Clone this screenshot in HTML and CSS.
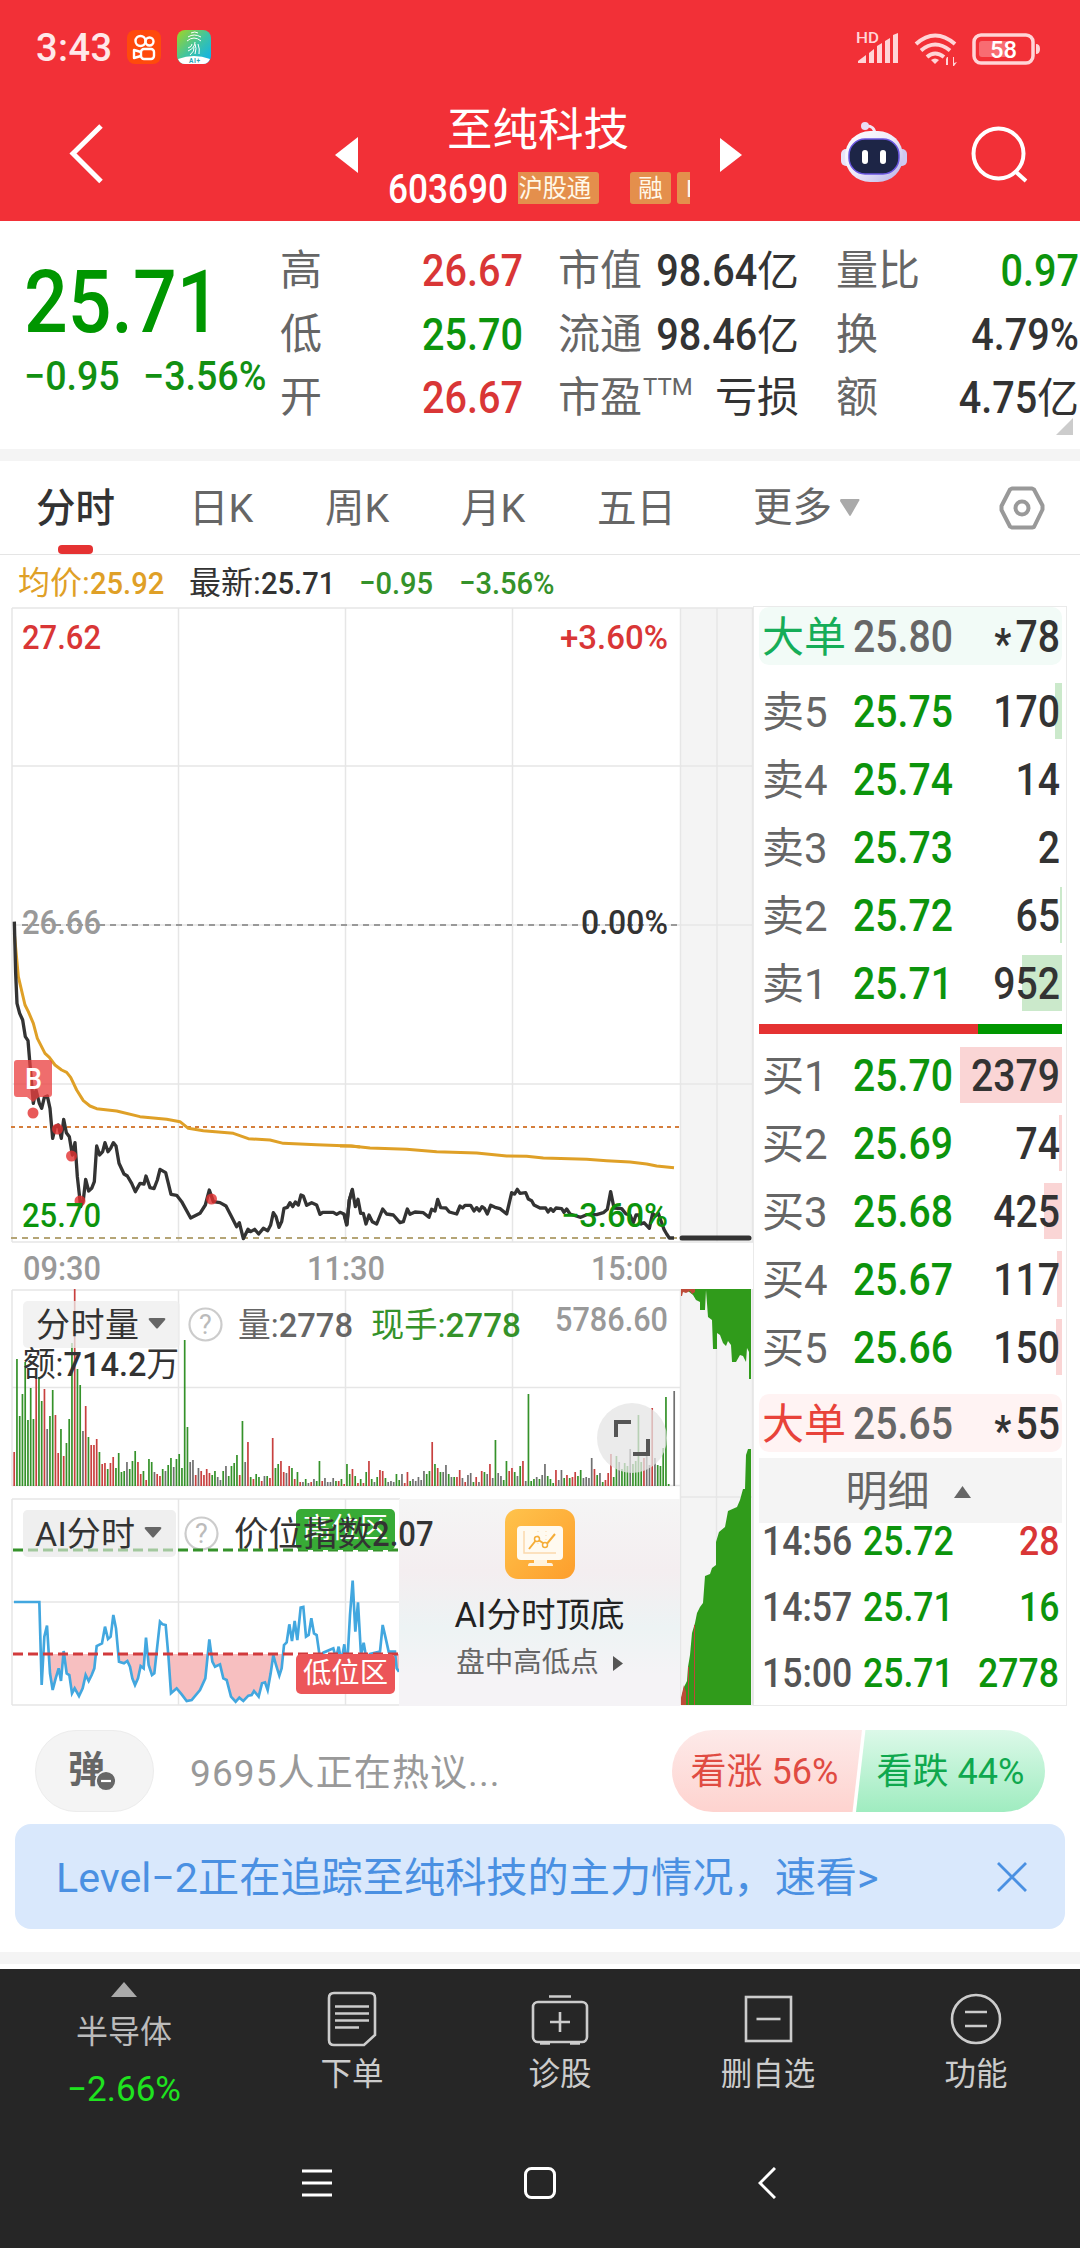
FILE: index.html
```html
<!DOCTYPE html>
<html lang="zh-CN">
<head>
<meta charset="utf-8">
<title>至纯科技 603690</title>
<link rel="stylesheet" href="styles.css">
</head>
<body>
<header class="top">
  <div class="status">
    <span class="clock">3:43</span>
    <svg class="app" width="34" height="34" viewBox="0 0 34 34"><rect width="34" height="34" rx="8" fill="#ff4a0c"/><g fill="none" stroke="#fff" stroke-width="2.400"><circle cx="13.500" cy="11" r="5"/><circle cx="22.500" cy="11.500" r="4"/><rect x="14" y="19" width="13" height="10" rx="3"/><path d="M14 22l-7-2v8l7-2" stroke-linejoin="round"/></g></svg>
    <svg class="app2" width="34" height="34" viewBox="0 0 34 34"><defs><linearGradient id="ga" x1="0" y1="0" x2="1" y2="1"><stop offset="0" stop-color="#a2d522"/><stop offset=".5" stop-color="#40c4a0"/><stop offset="1" stop-color="#08aef5"/></linearGradient></defs><rect width="34" height="34" rx="8" fill="url(#ga)"/><path d="M1 29Q17 23 33 29Q31 34 26 34H8Q3 34 1 29" fill="#fff"/><g fill="none" stroke="#fff" stroke-width="1"><path d="M14 3q4-2 7 0M11 7q6-4 13 0M10 11q7-6 14 0M18 12q0 6-7 9M15 14q0 3-4 4M17 17q1 4-4 8M18 14q2 4 0 10M21 14q2 5 1 10"/></g><text x="12" y="33" font-size="6.500" font-weight="700" fill="#29a7b8" textLength="11">AI+</text></svg>
    <span class="grow"></span>
    <svg width="186" height="40" viewBox="856 26 186 40" fill="#ffd5d7">
      <text x="857" y="42" font-size="15" font-weight="500" textLength="23" lengthAdjust="spacingAndGlyphs">HD</text>
      <path d="M859 62v-2l8-6v8zM870 62v-10l5-4v14zM878 62v-17l5-3v20zM886 62v-22l5-3v25zM894 62v-28l5-2v30z"/>
      <g fill="none" stroke="#ffd5d7" stroke-width="4"><path d="M917 43q19-17 39 0M922 49.500q14-12 29 0M928 56q8-7 17 0"/></g>
      <path d="M932 59q4-3 8 0l-4 4zM947 64v-6l1-2h1v8zM954 65v-9h1v6l3-1-3 4z"/>
      <rect x="975" y="34" width="59" height="28" rx="7" fill="none" stroke="#ffd5d7" stroke-width="3.500"/><rect x="980" y="40" width="29" height="16" rx="3" fill="#f86c72"/><path d="M1037 43q4 0 4 5t-4 5z"/>
      <text x="991" y="57" font-size="24" font-weight="500" fill="#fff" textLength="27" lengthAdjust="spacingAndGlyphs">58</text>
    </svg>
  </div>
  <div class="titlebar">
    <svg class="back" width="40" height="64" viewBox="68 121 40 64"><path d="M101 126L73 153.500l28 28" fill="none" stroke="#fff" stroke-width="5"/></svg>
    <svg class="prev" width="23" height="36"><path d="M0 18L23 0V36z" fill="#fff"/></svg>
    <div class="name">
      <h1>至纯科技</h1>
      <div class="code"><span class="num">603690</span><span class="tags"><i class="tag first">沪股通</i><i class="tag fin">融</i><i class="tag cut">L</i></span></div>
    </div>
    <svg class="next" width="22" height="34"><path d="M0 0L22 17L0 34z" fill="#fff"/></svg>
    <svg class="robot" width="68" height="64" viewBox="841 121 68 64"><defs><linearGradient id="rb" x1="0" y1="0" x2="1" y2="1"><stop offset="0" stop-color="#fff"/><stop offset=".5" stop-color="#eeeaf9"/><stop offset="1" stop-color="#b5afe8"/></linearGradient></defs><path d="M866 126q10-1 10 9" fill="none" stroke="#f4e5f4" stroke-width="3"/><circle cx="866" cy="126" r="4" fill="#eadcf4"/><rect x="842" y="149" width="12" height="17" rx="5" fill="#e7e3f8"/><rect x="896" y="149" width="12" height="17" rx="5" fill="#cfc9f2"/><rect x="846" y="131" width="58" height="51" rx="25" fill="url(#rb)"/><rect x="850" y="139" width="50" height="35" rx="16" fill="#1d2546" stroke="#6a56e0" stroke-width="1.500"/><rect x="863" y="150" width="6" height="14" rx="3" fill="#fff"/><rect x="881" y="150" width="6" height="14" rx="3" fill="#fff"/></svg>
    <svg class="search" width="58" height="60" viewBox="972 126 58 60" fill="none" stroke="#fff" stroke-width="4"><circle cx="999.500" cy="153.500" r="25"/><path d="M1017 172l10 9"/></svg>
  </div>
</header>

<section class="quote">
  <div class="last">
    <div class="big num">25.71</div>
    <div class="chg"><span class="num">−0.95</span><span class="num">−3.56%</span></div>
  </div>
  <dl class="c1"><dt>高</dt><dd class="red num">26.67</dd><dt>低</dt><dd class="green num">25.70</dd><dt>开</dt><dd class="red num">26.67</dd></dl>
  <dl class="c2"><dt>市值</dt><dd><b class="num">98.64</b>亿</dd><dt>流通</dt><dd><b class="num">98.46</b>亿</dd><dt>市盈<sup>TTM</sup></dt><dd>亏损</dd></dl>
  <dl class="c3"><dt>量比</dt><dd class="green num">0.97</dd><dt>换</dt><dd class="num">4.79%</dd><dt>额</dt><dd><b class="num">4.75</b>亿</dd></dl>
  <svg class="corner" width="17" height="17"><path d="M17 0V17H0z" fill="#ccc"/></svg>
</section>

<nav class="tabs">
  <a class="on">分时</a><a>日K</a><a>周K</a><a>月K</a><a>五日</a>
  <a class="more">更多<svg width="20" height="17"><path d="M1 0h18q1 1 0 2L11 16q-1 2-2 0L0 2Q0 0 1 0" fill="#aaa"/></svg></a>
  <svg class="gear" width="46" height="46" viewBox="0 0 46 46" fill="none" stroke="#999" stroke-width="4"><path d="M13 3.500h20l2 1 8.500 16v4L35 42l-2 .500H13l-2-1L2.500 25v-4L11 4.500z" stroke-linejoin="round"/><circle cx="23" cy="23" r="6.500"/></svg>
</nav>
<div class="info"><span class="avg">均价:<b class="num">25.92</b></span><span class="new">最新:<b class="num">25.71</b></span><span class="num d1">−0.95</span><span class="num d2">−3.56%</span></div>

<main class="board">
  <div class="charts">
    <svg width="753" height="1106" viewBox="0 604 753 1106">
      <defs><clipPath id="low"><rect x="0" y="1107" width="1197" height="160"/></clipPath>
      <linearGradient id="ob" x1="0" y1="0" x2="1" y2="1"><stop offset="0" stop-color="#ffc34c"/><stop offset="1" stop-color="#fd9e2c"/></linearGradient></defs>
      <rect x="681" y="608" width="72" height="635" fill="#f4f4f4"/>
      <rect x="681" y="1289" width="72" height="417" fill="#f4f4f4"/>
      <g stroke="#e6e6e6" stroke-width="1.500" fill="none">
        <path d="M12 608H753M12 766H680M12 1084H753M12 925H753M680 766H753M12 1242H753M12 608V1242M178.500 608V1242M345.500 608V1242M512.500 608V1242M680.500 608V1242M717 608V1242M752.500 608V1242"/>
        <path d="M12 1290H680M12 1387.500H680M12 1485.500H680M12 1290V1486M178.500 1290V1486M345.500 1290V1486M512.500 1290V1486"/>
        <path d="M12 1499H400M12 1602H400M12 1705H400M12 1499V1705M178.500 1499V1705M345.500 1499V1705M680.500 1289V1705M716.500 1289V1705M681 1497H753M752.500 1289V1705"/>
      </g>
      <path d="M22 925H680" stroke="#999" stroke-width="2" stroke-dasharray="6 5"/>
      <path d="M11 1127H680" stroke="#d57e3c" stroke-width="2" stroke-dasharray="4 4"/>
      <path d="M11 1238H680" stroke="#b5a576" stroke-width="2" stroke-dasharray="6 5"/>
      <g fill="none" stroke="#dfa027" stroke-width="9" stroke-linejoin="round">
        <path transform="translate(0 890) scale(.33333)" d="M43 130L55 260 75 345 85 365 100 400 112 445 135 490 148 502 165 525 185 540 200 547 212 562 230 600 250 632 270 648 290 656 350 663 420 680 500 688 540 695 565 715 610 722 700 730 745 746 810 750 850 760 950 764 1050 768 1080 771"/>
        <path transform="translate(340 1080) scale(.33333)" d="M0 198L35 198 90 204 200 208 290 215 410 219 500 228 560 229 610 234 740 238 800 242 870 246 920 252 950 258 1002 263"/>
      </g>
      <g fill="none" stroke="#333" stroke-width="10" stroke-linejoin="round">
        <path transform="translate(0 890) scale(.33333)" d="M43 95L47 250 51 340 59 370 68 390 76 440 84 452 93 560 100 640 108 600 118 640 125 655 133 622 142 618 150 655 158 745 166 710 175 705 184 745 191 688 199 728 208 740 217 795 225 758 232 860 242 950 250 930 257 868 266 903 275 895 283 875 290 768 299 795 308 785 315 758 324 785 332 775 340 758 348 768 357 820 372 852 382 858 395 880 406 905 420 880 432 882 438 858 450 893 462 896 472 870 480 838 497 848 505 880 513 913 530 916 545 935 572 984 600 970 616 945 628 900 640 935 660 938 678 948 692 975 710 1010 718 998 730 1046 744 1018 752 1025 764 1018 776 1032 790 1015 803 1022 812 1005 820 968 828 980 837 1012 845 995 852 955 862 952 870 938 878 950 886 936 895 945 903 915 910 918 920 946 935 938 950 945 960 973 968 967 1000 967 1010 973 1020 967 1032 972 1041 1003 1048 930 1057 900"/>
        <path transform="translate(340 1080) scale(.33333)" d="M12 402L20 435 28 360 37 328 46 380 54 358 62 400 70 400 78 432 87 405 97 425 110 432 128 387 140 402 160 405 180 428 190 425 202 387 210 403 225 396 250 398 267 412 275 388 285 393 293 358 302 383 318 384 328 396 350 402 360 378 368 384 375 376 392 376 402 393 410 383 418 393 426 380 434 386 442 402 452 376 465 382 480 386 500 402 515 338 524 342 532 328 540 340 557 338 565 357 575 362 582 375 600 384 617 384 624 396 632 386 640 394 648 384 665 386 672 397 680 387 690 402 722 412 740 404 770 404 790 398 802 388 812 335 822 384 845 386 858 402 870 405 880 428 888 405 897 405 903 432 912 428 928 445 938 400 946 408 955 400 962 420 972 448 980 462 988 474 1002 474"/>
      </g>
      <path d="M682 1238H749" stroke="#333" stroke-width="5" stroke-linecap="round"/>
      <g fill="#e22f2f" fill-opacity=".8"><circle cx="33" cy="1113" r="5.500"/><circle cx="57.500" cy="1129" r="5.500"/><circle cx="71.500" cy="1156" r="5.500"/><circle cx="80" cy="1201" r="5.500"/><circle cx="211.500" cy="1199" r="5.500"/>
      <path d="M17 1060h32q3 0 3 3v31q0 3-3 3H39l-6 5-6-5H17q-3 0-3-3v-31q0-3 3-3" fill="#ea3f3f" fill-opacity=".76"/></g>
      <g font-weight="500" font-size="34">
        <text x="25" y="1089" font-size="29" fill="#fff" textLength="17" lengthAdjust="spacingAndGlyphs">B</text>
        <text x="22" y="649" fill="#d93636" textLength="79" lengthAdjust="spacingAndGlyphs">27.62</text>
        <text x="560" y="649" fill="#d93636" textLength="108" lengthAdjust="spacingAndGlyphs">+3.60%</text>
        <text x="22" y="934" fill="#999" textLength="79" lengthAdjust="spacingAndGlyphs">26.66</text>
        <text x="581" y="934" fill="#333" textLength="87" lengthAdjust="spacingAndGlyphs">0.00%</text>
        <text x="22" y="1227" fill="#0c940c" textLength="79" lengthAdjust="spacingAndGlyphs">25.70</text>
        <text x="561" y="1227" fill="#0c940c" textLength="107" lengthAdjust="spacingAndGlyphs">−3.60%</text>
        <g fill="#999"><text x="23" y="1280" textLength="78" lengthAdjust="spacingAndGlyphs">09:30</text><text x="307" y="1280" textLength="78" lengthAdjust="spacingAndGlyphs">11:30</text><text x="591" y="1280" textLength="77" lengthAdjust="spacingAndGlyphs">15:00</text></g>
      </g>

      <g id="volume" stroke-width="1.700"></g>
      <path fill="#309b1b" d="M681 1289H751V1379H749V1352L747 1348 746 1362 743 1356 740 1355 736 1362H732L731 1345 728 1341 726 1346 723 1343 720 1335 717 1333V1349H713L712 1320 708 1317 706 1290 705 1310H700V1302L696 1300 693 1295 688 1291z"/>
      <path fill="#bd4a38" d="M681 1289h14v3l-3 2-2-3-4 2-3-1-1 4h-1z"/>
      <path fill="#309b1b" d="M681 1705V1700L684 1687 687 1681 688 1667 690 1655 692 1633 695 1623 697 1613 700 1607 703 1603 705 1576 710 1574 712 1568 716 1565V1542L719 1532 725 1527 728 1511 737 1507 740 1500 743 1489H745L746 1455 748 1449H751V1705z"/>
      <path fill="#bd4a38" d="M681 1705V1698L684 1685 686 1692V1705zM688 1667h1v38h-1zM694 1625h1v80h-1z"/>

      <rect x="23" y="1301" width="157" height="47" rx="5" fill="#ededed" fill-opacity=".75"/>
      <rect x="23" y="1510" width="153" height="47" rx="5" fill="#ededed" fill-opacity=".75"/>
      <path d="M150 1318h14q2 0 1 2l-7 8q-1 1-2 0l-7-8q-1-2 1-2" fill="#666"/>
      <g fill="none" stroke="#ccc" stroke-width="2.200"><circle cx="205.500" cy="1324.500" r="16"/><circle cx="201.500" cy="1533.500" r="16"/></g>
      <g font-size="27" fill="#bbb" text-anchor="middle"><text x="205.500" y="1334">?</text><text x="201.500" y="1543">?</text></g>
      <g font-size="34" fill="#333">
        <text x="36" y="1337" textLength="103">分时量</text>
        <text x="238" y="1337" fill="#666" textLength="115" lengthAdjust="spacingAndGlyphs">量:<tspan font-weight="500">2778</tspan></text>
        <text x="371" y="1337" fill="#35922a" textLength="150" lengthAdjust="spacingAndGlyphs">现手:<tspan font-weight="500">2778</tspan></text>
        <text x="555" y="1331" fill="#999" font-weight="500" textLength="113" lengthAdjust="spacingAndGlyphs">5786.60</text>
        <text x="23" y="1376" textLength="156" lengthAdjust="spacingAndGlyphs">额:<tspan font-weight="500">714.2</tspan>万</text>
      </g>
      <circle cx="632" cy="1438" r="35" fill="#e4e4e4" fill-opacity=".75"/>
      <path d="M631 1422H616V1437M633 1454H648V1439" fill="none" stroke="#555" stroke-width="4"/>

      <path d="M13 1550H399" stroke="#35922a" stroke-width="3" stroke-dasharray="10 5"/>
      <g transform="translate(0 1285) scale(.33333)">
        <path fill="#f7bfc0" clip-path="url(#low)" d="M42 951L118 951 125 1200 133 1055 141 1022 150 1165 158 1215 167 1180 176 1150 183 1188 191 1098 200 1165 208 1170 216 1225 224 1210 237 1233 248 1210 257 1170 266 1188 275 1170 283 1150 290 1083 348 1030 357 1130 372 1135 382 1128 390 1145 397 1180 405 1200 414 1180 422 1143 431 1150 438 1058 446 1140 456 1170 463 1165 470 1100 505 1110 513 1225 530 1210 545 1228 560 1248 575 1245 600 1215 616 1180 628 1063 637 1130 645 1145 660 1138 670 1180 680 1185 693 1235 707 1250 718 1238 730 1248 745 1232 755 1230 762 1218 776 1235 786 1195 795 1192 803 1215 812 1165 820 1110 828 1140 838 1172 845 1150 852 1080 1185 1100 1190 1150 1197 1160V1080H42z"/>
        <path fill="none" stroke="#42a7df" stroke-width="8" d="M42 951L118 951 125 1200 133 1055 141 1022 150 1165 158 1215 167 1180 176 1150 183 1188 191 1098 200 1165 208 1170 216 1225 224 1210 237 1233 248 1210 257 1170 266 1188 275 1170 283 1150 290 1083 306 1075 315 1025 324 1062 332 1055 340 990 348 1030 357 1130 372 1135 382 1128 390 1145 397 1180 405 1200 414 1180 422 1143 431 1150 438 1058 446 1140 456 1170 463 1165 470 1100 480 1010 488 1018 497 1020 505 1110 513 1225 530 1210 545 1228 560 1248 575 1245 600 1215 616 1180 628 1063 637 1130 645 1145 660 1138 670 1180 680 1185 693 1235 707 1250 718 1238 730 1248 745 1232 755 1230 762 1218 776 1235 786 1195 795 1192 803 1215 812 1165 820 1110 828 1140 838 1172 845 1150 852 1080 860 1072 868 1018 876 1068 884 1008 892 1065 902 968 910 966 918 1055 926 1050 934 1000 942 1045 950 1050 960 1120 970 1103 1000 1090 1008 1120 1016 1085 1024 1130 1033 1078 1041 1150 1050 990 1058 887 1066 1040 1074 952 1083 1110 1091 1073 1099 1120 1110 1107 1140 1100 1148 1020 1156 1055 1166 1100 1185 1100 1190 1150 1197 1160"/>
      </g>
      <path d="M13 1654H399" stroke="#d13a3c" stroke-width="3" stroke-dasharray="10 5"/>
      <rect x="296" y="1509" width="99" height="41" rx="5" fill="#38ab36"/><rect x="296" y="1654" width="99" height="40" rx="5" fill="#ec5659"/>
      <rect x="23" y="1510" width="153" height="47" rx="5" fill="#ededed" fill-opacity=".6"/>
      <path d="M146 1527h14q2 0 1 2l-7 8q-1 1-2 0l-7-8q-1-2 1-2" fill="#666"/>
      <g font-size="28" fill="#fff"><text x="303" y="1538" textLength="85" lengthAdjust="spacingAndGlyphs">高位区</text><text x="303" y="1683" textLength="85" lengthAdjust="spacingAndGlyphs">低位区</text></g>
      <text x="35" y="1546" font-size="34" fill="#333" textLength="100">AI分时</text>
    </svg>
    <div class="aicard">
      <svg width="70" height="70" viewBox="0 0 70 70"><rect width="70" height="70" rx="13" fill="url(#ob)"/><rect x="12" y="17" width="46" height="34" rx="4" fill="#fffaf0"/><path d="M29 51h13v3h4q2 0 2 3h-25q0-3 2-3h4z" fill="#fff3dd"/><path d="M19 22v22h32" fill="none" stroke="#fbd9ac" stroke-width="1.500"/><path d="M33 22v16M41 22v16" stroke="#fbd9ac" stroke-dasharray="1 3"/><path d="M24 40l8-10 9 6 9-11" fill="none" stroke="#f5ad38" stroke-width="2"/><circle cx="32" cy="30" r="2.500" fill="#fff" stroke="#f5ad38" stroke-width="1.500"/><circle cx="40" cy="36" r="2.500" fill="#fff" stroke="#f5ad38" stroke-width="1.500"/></svg>
      <strong>AI分时顶底</strong>
      <span>盘中高低点<svg width="10" height="17"><path d="M0 1L10 8.500 0 16z" fill="#555"/></svg></span>
    </div>
    <div class="aiindex">价位指数<b class="num">2.07</b></div>
  </div>

  <aside class="book">
    <div class="row vip sell"><span>大单</span><b class="num">25.80</b><em class="num"><i class="star">*</i>78</em></div>
    <div class="group">
      <div class="row"><span>卖5</span><b class="num">25.75</b><em class="num">170</em><i class="depth" style="width:7px"></i></div>
      <div class="row"><span>卖4</span><b class="num">25.74</b><em class="num">14</em></div>
      <div class="row"><span>卖3</span><b class="num">25.73</b><em class="num">2</em></div>
      <div class="row"><span>卖2</span><b class="num">25.72</b><em class="num">65</em><i class="depth" style="width:2px"></i></div>
      <div class="row"><span>卖1</span><b class="num">25.71</b><em class="num">952</em><i class="depth" style="width:40px"></i></div>
    </div>
    <div class="ratio"><span></span></div>
    <div class="group buy">
      <div class="row"><span>买1</span><b class="num">25.70</b><em class="num">2379</em><i class="depth" style="width:102px"></i></div>
      <div class="row"><span>买2</span><b class="num">25.69</b><em class="num">74</em><i class="depth" style="width:3px"></i></div>
      <div class="row"><span>买3</span><b class="num">25.68</b><em class="num">425</em><i class="depth" style="width:18px"></i></div>
      <div class="row"><span>买4</span><b class="num">25.67</b><em class="num">117</em><i class="depth" style="width:5px"></i></div>
      <div class="row"><span>买5</span><b class="num">25.66</b><em class="num">150</em><i class="depth" style="width:6px"></i></div>
    </div>
    <div class="row vip purchase"><span>大单</span><b class="num">25.65</b><em class="num"><i class="star">*</i>55</em></div>
    <div class="detail">明细<svg width="17" height="12"><path d="M8.500 0L17 12H0z" fill="#666"/></svg></div>
    <div class="ticks">
      <div><span class="num">14:56</span><b class="num">25.72</b><em class="num red">28</em></div>
      <div><span class="num">14:57</span><b class="num">25.71</b><em class="num">16</em></div>
      <div><span class="num">15:00</span><b class="num">25.71</b><em class="num">2778</em></div>
    </div>
  </aside>
</main>

<section class="talk">
  <div class="dan"><span>弹</span><svg width="22" height="22" viewBox="0 0 20 20"><circle cx="10" cy="10" r="9" fill="#666" stroke="#f3f3f3" stroke-width="1.500"/><path d="M5.500 10h9" stroke="#fff" stroke-width="2"/></svg></div>
  <p>9695人正在热议...</p>
  <div class="vote"><span class="up">看涨 56%</span><span class="down">看跌 44%</span></div>
</section>
<section class="banner"><span>Level−2正在追踪至纯科技的主力情况，速看&gt;</span><svg width="30" height="30"><path d="M1 1L29 29M29 1L1 29" stroke="#4a90e2" stroke-width="2.800"/></svg></section>
<div class="band"></div>

<footer class="dock">
  <div class="menu">
    <div class="sector"><svg width="26" height="15"><path d="M13 0L26 15H0z" fill="#aaa"/></svg><span>半导体</span><b>−2.66%</b></div>
    <div class="item"><svg width="60" height="60" viewBox="-30 -30 60 60"><path d="M-18-26h36q5 0 5 5V16L12 26H-18q-5 0-5-5V-21q0-5 5-5z"/><path d="M-17-12.500H17M-17-5.500H17M-17 1.500H17M-17 8.500H7"/></svg><span>下单</span></div>
    <div class="item"><svg width="60" height="60" viewBox="-30 -30 60 60"><rect x="-27" y="-17" width="54" height="40" rx="5"/><path d="M-11-22.500H11M-10 3H10M0-7V13M-20 24.500h10M10 24.500h10"/></svg><span>诊股</span></div>
    <div class="item"><svg width="60" height="60" viewBox="-30 -30 60 60"><rect x="-22" y="-22" width="45" height="44"/><path d="M-11.500 0H12.500"/></svg><span>删自选</span></div>
    <div class="item"><svg width="60" height="60" viewBox="-30 -30 60 60"><circle r="24"/><path d="M-11-7H11M-11 7H11"/></svg><span>功能</span></div>
  </div>
  <div class="sysnav">
    <svg width="30" height="30" viewBox="0 0 30 30"><path d="M0 3H30M0 15H30M0 27H30" stroke-width="3"/></svg>
    <svg width="32" height="32" viewBox="0 0 32 32"><rect x="1.500" y="1.500" width="29" height="29" rx="6" stroke-width="3"/></svg>
    <svg width="18" height="32" viewBox="0 0 18 32"><path d="M17 1L2 16 17 31" stroke-width="3"/></svg>
  </div>
</footer>
<script src="script.js"></script>
</body>
</html>
```
FILE: styles.css
```css
* { box-sizing: border-box; }
body { margin: 0; width: 1080px; height: 2248px; background: #fff; color: #333; overflow: hidden;
  font-family: Roboto, "Noto Sans CJK SC", sans-serif; font-size: 42px; display: flex; flex-direction: column; }
h1, p, dl, dd { margin: 0; }
i, em { font-style: normal; }
b { font-weight: 500; }
svg { flex: none; display: block; }
svg text { white-space: pre; }
.num { font-weight: 500; display: inline-block; transform: scaleX(.9); transform-origin: right; }
.red { color: #d93636; }
.green { color: #0c940c; }
.grow { flex: 1; }

.top { height: 221px; background: #f23037; color: #fff; flex: none; }
.status { height: 94px; padding: 0 39px 0 36px; display: flex; align-items: center; }
.clock { font-size: 38px; font-weight: 500; width: 91px; color: #ffe8e9; letter-spacing: .4px; padding-top: 1px; }
.app2 { margin-left: 16px; }
.titlebar { height: 127px; display: flex; align-items: flex-start; }
.back { margin: 27px 0 0 68px; }
.prev { margin: 43px 0 0 227px; }
.name { width: 310px; margin: 10px 0 0 27px; display: flex; flex-direction: column; align-items: center; }
.name h1 { font-weight: 400; font-size: 45.500px; line-height: 54px; margin-right: 4px; }
.code { display: flex; height: 46px; margin-top: 2px; width: 302px; font-size: 40px; padding-top: 4px; }
.code .num { width: 119px; line-height: 52px; transform: scaleX(.88); transform-origin: left; margin-left: -1px; }
.tags { display: flex; width: 172px; height: 32px; overflow: hidden; margin: 8px 0 0 11px; }
.tag { background: #e48f4c; color: #fff8e8; font-size: 24.500px; line-height: 33px; border-radius: 3px; height: 32px; flex: none; text-align: center; white-space: nowrap; }
.first { width: 81px; padding-right: 8px; text-align: right; letter-spacing: -.3px; border-radius: 0 3px 3px 0; }
.fin { width: 41px; margin-left: 31px; }
.cut { width: 30px; margin-left: 6px; padding-left: 9px; text-align: left; }
.next { margin: 44px 0 0 25px; }
.robot { margin: 27px 0 0 98px; }
.search { margin: 32px 0 0 63px; }

.quote { height: 240px; flex: none; border-bottom: 12px solid #f4f4f4; display: flex; position: relative; padding-top: 18px; }
.last { width: 280px; padding-left: 24px; color: #009600; }
.big { font-size: 87px; line-height: 102px; margin-top: 12px; transform: scaleX(.885); transform-origin: left; }
.chg { display: flex; font-size: 40px; line-height: 44px; color: #129012; margin-top: 2px; }
.chg .num { transform: scaleX(.94); transform-origin: left; width: 119px; white-space: nowrap; }
dl { display: grid; grid-template-columns: 84px 1fr; grid-auto-rows: 63.500px; line-height: 64px; align-content: start; flex: none; }
dt { color: #666; white-space: nowrap; }
dd { text-align: right; white-space: nowrap; }
dl .num { font-size: 44px; transform-origin: right; }
dt sup { font-size: 24px; vertical-align: 17px; line-height: 0; margin-left: 1px; }
.c1 { width: 243px; }
.c2 { width: 241px; margin-left: 35px; }
.c3 { width: 243px; margin-left: 37px; }
.corner { position: absolute; right: 7px; bottom: 14px; }

.tabs { height: 94px; flex: none; border-bottom: 1px solid #e5e5e5; display: flex; align-items: center; font-size: 39.500px; color: #666; padding-left: 36px; }
.tabs a { width: 136px; white-space: nowrap; line-height: 95px; height: 93px; }
.tabs a:first-of-type { width: 153px; }
.tabs a:nth-of-type(5) { width: 156px; }
.tabs .on { color: #333; font-weight: 500; position: relative; }
.tabs .on::after { content: ""; position: absolute; left: 22px; bottom: 0; width: 35px; height: 9px; border-radius: 4px; background: #e53232; }
.tabs .more { display: flex; align-items: center; gap: 8px; width: 246px; }

.info { height: 49px; flex: none; display: flex; align-items: center; font-size: 32px; padding: 8px 0 0 18px; line-height: 41px; }
.info .num { transform-origin: left; transform: scaleX(.91); }
.avg { color: #dfa027; width: 171px; }
.new { width: 170px; }
.d1, .d2 { color: #35922a; width: 100px; white-space: nowrap; }

.board { display: flex; flex: none; height: 1106px; }
.charts { width: 753px; position: relative; flex: none; }
.aicard { position: absolute; left: 399px; top: 895px; width: 281px; height: 207px; padding-top: 10px; display: flex; flex-direction: column; align-items: center;
  background: linear-gradient(#f5f5f5, #f4eef0 35%, #edf3f4 62%, #f5f3f6 85%); }
.aicard strong { font-weight: 400; font-size: 34.500px; line-height: 46px; color: #222; margin-top: 13px; }
.aicard span { display: flex; align-items: center; gap: 14px; font-size: 28.500px; color: #666; line-height: 38px; margin-top: 6px; }
.aiindex { position: absolute; left: 234px; top: 907px; font-size: 34.500px; line-height: 47px; white-space: nowrap; }
.aiindex .num { transform-origin: left; }

.book { width: 314px; height: 1100px; margin-top: 2px; border: 1px solid #eaeaea; padding: 0 4px 0 5px; flex: none; overflow: hidden; }
.row { height: 56px; margin-bottom: 12px; display: grid; grid-template-columns: 91px 102px 1fr; padding: 3px 2px 0 3px; align-items: center; position: relative; line-height: 53px; color: #666; }
.row b { color: #0c940c; font-size: 44px; }
.row em { color: #333; font-size: 44px; justify-self: end; position: relative; z-index: 1; }
.depth { position: absolute; right: 0; top: 0; height: 56px; background: #cbe9cb; }
.buy .depth { background: #fad5d5; }
.star { position: relative; top: 6px; font-size: 42px; font-weight: 700; margin-right: 5px; }
.vip { height: 58px; border-radius: 10px; margin: 0 0 18px; }
.vip b { color: #666; }
.sell { background: #f2fbf7; }
.sell span { color: #16ad58; }
.purchase { background: #fff3f3; margin: 19px 0 6px; }
.purchase span { color: #e8423a; }
.group { height: 328px; }
.ratio { height: 10px; background: #009600; margin: 13px 0; }
.ratio span { display: block; height: 10px; width: 219px; background: #e53232; }
.detail { height: 65px; background: #f4f4f4; color: #666; display: flex; align-items: center; justify-content: center; gap: 24px; padding: 2px 5px 0 0; line-height: 60px; }
.ticks div { height: 66px; display: grid; grid-template-columns: 101px 89px 1fr; align-items: center; font-size: 40px; line-height: 40px; padding: 0 3px 0 3px; position: relative; top: -14px; color: #0c940c; }
.ticks span { color: #555; }
.ticks em { justify-self: end; }
.ticks .red { color: #d93636; }
.ticks .num, .row .num { transform: scaleX(.89); }
.row b.num, .ticks b.num, .ticks span.num { transform-origin: left; }

.talk { display: flex; height: 82px; margin-top: 20px; padding: 0 35px; flex: none; align-items: center; font-size: 37px; color: #999; }
.dan { width: 119px; height: 82px; border-radius: 41px; background: #f4f4f4; border: 1px solid #ececec; color: #666; font-weight: 700; display: flex; align-items: center; padding-left: 32px; }
.dan span { margin-top: -8px; }
.dan svg { margin: 20px 0 0 -10px; }
.talk p { margin: -3px 0 0 36px; width: 482px; letter-spacing: 1.1px; }
.vote { display: flex; width: 373px; height: 82px; font-size: 36px; line-height: 84px; }
.vote span { height: 82px; white-space: nowrap; text-align: center; }
.up { width: 190px; color: #e04b42; border-radius: 41px 0 0 41px; background: linear-gradient(#fdeae9, #fed3cf); clip-path: polygon(0 0, 100% 0, 95% 100%, 0 100%); padding-right: 5px; }
.down { width: 189px; margin-left: -6px; color: #0fa84e; border-radius: 0 41px 41px 0; background: linear-gradient(#dcf9e9, #9fecc0); clip-path: polygon(5% 0, 100% 0, 100% 100%, 0 100%); }
.banner { height: 105px; flex: none; margin: 12px 15px 0; border-radius: 16px; background: #d9e8fc; color: #4a90e2; display: flex; align-items: center; justify-content: space-between; padding: 0 38px 0 41px; font-size: 41.200px; }
.banner span { margin-top: -5px; }
.band { height: 12px; flex: none; margin: 23px 0 5px; background: #f4f4f4; }

.dock { flex: 1; background: #262626; color: #ccc; font-size: 31px; }
.menu { display: flex; height: 182px; padding-left: 20px; }
.menu > div { width: 208px; flex: none; display: flex; flex-direction: column; align-items: center; }
.menu .sector { padding-top: 13px; margin-right: 20px; }
.sector span { font-size: 32px; line-height: 44px; margin-top: 13px; color: #bbb; }
.sector b { font-weight: 400; font-size: 35px; line-height: 40px; color: #1fe31f; margin-top: 16px; }
.item { padding-top: 20px; }
.item svg { stroke: #ccc; fill: none; stroke-width: 2.600px; }
.item span { line-height: 44px; margin-top: 4px; font-size: 31.500px; }
.sysnav { display: flex; align-items: center; height: 64px; padding-left: 302px; fill: none; stroke: #fff; }
.sysnav svg:nth-child(2) { margin: 0 202px 0 192px; }
```
FILE: script.js
```js
// Per-minute volume: colour letter (r up, g down, k flat) followed by bar height.
const data = "r34 g127 g70 g92 g124 g66 g98 g67 r109 g109 g85 r97 k57 g70 g96 r71 r33 g57 r30 g43 g67 g143 r197 g117 g101 k55 r80 g49 r41 r41 r47 g34 r22 r23 g17 r23 r29 g18 g33 g14 g15 k24 g17 g25 g35 r24 r12 g15 r6 g27 g24 k14 r12 r10 g17 k15 g21 g28 k19 g27 g32 g18 g146 g59 k24 k26 r11 k18 r15 r11 r17 r13 g11 g15 k9 k6 g15 k20 g10 g20 g23 g31 r11 g65 k24 r44 g9 r7 g12 g9 r5 k10 g10 r8 r48 g18 g22 r25 r14 k13 r20 g18 r7 g14 r4 k4 g7 k3 r4 k7 g5 g25 r5 k8 k4 k4 k8 g5 r5 g7 r2 g22 g12 r17 g10 r3 g7 r3 g14 r25 g7 k4 g9 r16 r15 g8 k4 k5 k4 g12 g6 k12 r3 r14 g5 k7 k5 k9 k6 k15 g12 g15 r44 g22 r18 g14 k14 k21 g12 k9 g9 r9 r16 k8 r4 k11 k13 g4 r9 k4 r15 g14 k12 r22 k8 g46 k13 k10 g6 g25 r15 r18 g14 k10 g20 r25 k5 g92 g5 g7 k9 g7 k11 k22 g10 g7 g3 r16 k6 k16 g8 r11 g8 r9 r14 g10 g16 k8 k9 k8 k28 r17 g11 k13 g4 r6 r13 r32 g9 g30 k24 g17 g23 g20 k37 g22 g25 g71 g24 r28 k30 k21 r78 k28 g21 g20 g38 g89 g2 g0 k95".split(" ");
const colors = { r: "#c8403f", g: "#35922a", k: "#707070" };
const paths = { r: "", g: "", k: "" };
data.forEach((d, i) => {
  paths[d[0]] += "M" + (14.2 + i * 2.75).toFixed(2) + " 1486v-" + d.slice(1);
});
const group = document.getElementById("volume");
for (const key in paths) {
  const p = document.createElementNS("http://www.w3.org/2000/svg", "path");
  p.setAttribute("d", paths[key]);
  p.setAttribute("stroke", colors[key]);
  group.appendChild(p);
}
```
